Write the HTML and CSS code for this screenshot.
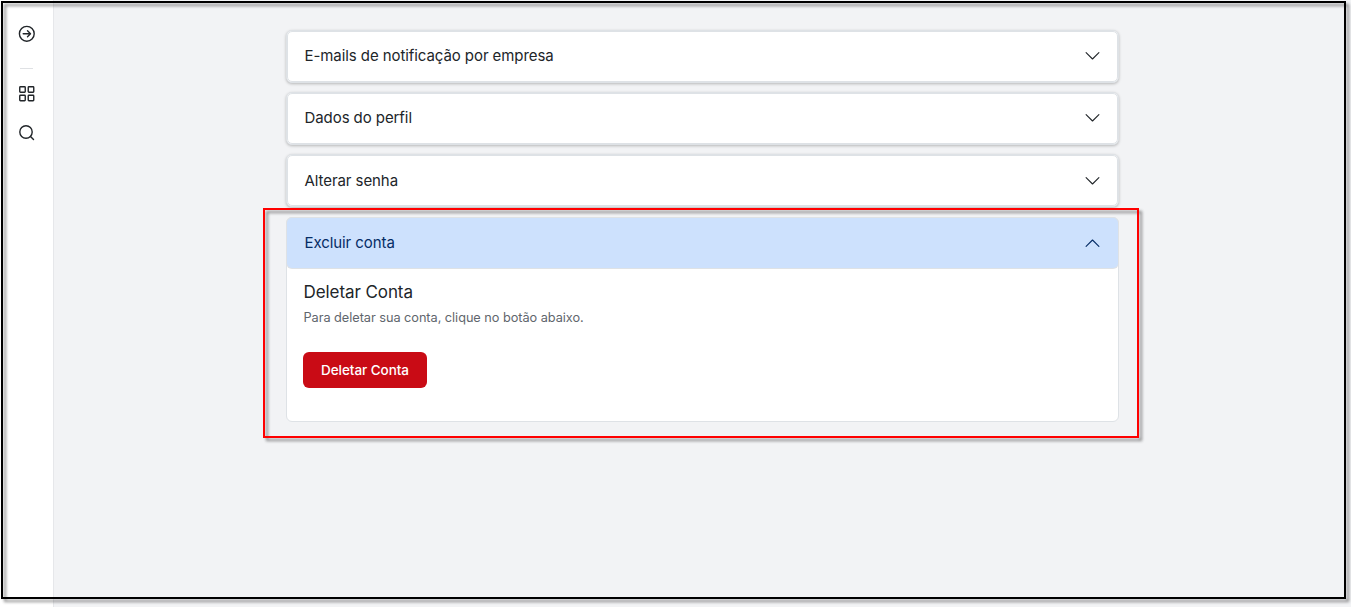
FILE: index.html
```html
<!DOCTYPE html>
<html lang="pt-BR">
<head>
<meta charset="utf-8">
<title>Configurações da conta</title>
<link rel="stylesheet" href="styles.css">
</head>
<body>
<div class="app">
  <aside class="sidebar">
    <svg class="icon icon-open" viewBox="0 0 18 18"><circle cx="8.8" cy="8.8" r="7.4"/><path d="M5.2 8.8h7.2M9.5 5.8l3 3-3 3"/></svg>
    <hr class="divider">
    <svg class="icon icon-grid" viewBox="0 0 18 18"><rect x="1.75" y="1.75" width="5.5" height="5.5" rx=".7"/><rect x="10.25" y="1.75" width="5.5" height="5.5" rx=".7"/><rect x="1.75" y="10.25" width="5.5" height="5.5" rx=".7"/><rect x="10.25" y="10.25" width="5.5" height="5.5" rx=".7"/></svg>
    <svg class="icon" viewBox="0 0 18 18"><circle cx="8" cy="8" r="6.2"/><path d="M12.5 12.5l3 3"/></svg>
  </aside>
  <main class="content">
    <div class="accordion">
      <section class="item closed"><button class="header"><span>E-mails de notificação por empresa</span><svg class="chevron" viewBox="0 0 16 16"><path d="M1.1 4.6 7.5 11l6.4-6.4"/></svg></button></section>
      <section class="item closed"><button class="header"><span>Dados do perfil</span><svg class="chevron" viewBox="0 0 16 16"><path d="M1.1 4.6 7.5 11l6.4-6.4"/></svg></button></section>
      <section class="item closed"><button class="header"><span>Alterar senha</span><svg class="chevron" viewBox="0 0 16 16"><path d="M1.1 4.6 7.5 11l6.4-6.4"/></svg></button></section>
      <section class="item open">
        <button class="header"><span>Excluir conta</span><svg class="chevron" viewBox="0 0 16 16"><path d="M1.1 11.4 7.5 5l6.4 6.4"/></svg></button>
        <div class="body">
          <h2 class="title">Deletar Conta</h2>
          <p class="text">Para deletar sua conta, clique no botão abaixo.</p>
          <button class="danger">Deletar Conta</button>
        </div>
      </section>
    </div>
  </main>
</div>
<div class="frame frame-page"></div>
<div class="frame frame-highlight"></div>
</body>
</html>
```
FILE: styles.css
```css
* { box-sizing: border-box; }
body { margin: 0; font-family: Inter, "Liberation Sans", sans-serif; color: #212529; overflow: hidden; }
button { font: inherit; border: 0; }
.app { display: flex; height: 607px; background: #f2f3f5; }
.sidebar {
  width: 54px; flex: none; display: flex; flex-direction: column; align-items: center;
  padding-top: 25px; background: #fff; border-right: 1px solid #e6e7ea;
}
.icon { width: 18px; height: 18px; flex: none; fill: none; stroke: #212529; stroke-width: 1.4; stroke-linecap: round; stroke-linejoin: round; }
.divider { width: 13px; height: 1px; margin: 25px 0 16px; border: 0; background: #dfe1e4; }
.icon-grid { margin-bottom: 21px; }
.content { flex: 1; padding: 30px 232px 0 232px; }
.accordion { display: flex; flex-direction: column; gap: 9.6px; }
.item { background: #fff; border: 1px solid #dee2e6; border-radius: 6px; }
.closed { box-shadow: 0 1px 3px rgba(0, 0, 0, .25); }
.closed .header { border: 1px solid #dee2e6; }
.header {
  display: flex; align-items: center; justify-content: space-between; width: 100%; height: 50.6px;
  padding: 0 17.5px; border-radius: 5px; background: #fff; color: #212529;
  font-size: 15px; letter-spacing: -.075px; text-align: left;
}
.closed .header { padding: 0 16.5px; }
.closed span { padding-bottom: 1.6px; }
.closed:nth-child(3) span { padding-bottom: .2px; }
.chevron { width: 16px; height: 16px; fill: none; stroke: currentColor; stroke-width: 1.1; stroke-linecap: round; stroke-linejoin: round; }
.open .header { background: #cde1fd; color: #052c65; box-shadow: 0 0 0 1px #dee2e6; }
.body { padding: 13px 16px 33px; }
.title { margin: 0; padding-left: .5px; font-size: 17px; font-weight: 400; line-height: 22px; letter-spacing: -.08px; }
.text { margin: 6.2px 0 25px; padding-left: .5px; font-size: 12.75px; line-height: 18px; letter-spacing: -.05px; color: #5f666d; }
.danger { display: block; width: 124px; height: 36px; padding: 0; border-radius: 6px; background: #c90b15; color: #fff; font-size: 13.5px; font-weight: 500; letter-spacing: -.05px; }
/* Annotation frames lie over the page */
.frame { position: absolute; pointer-events: none; filter: drop-shadow(3px 3px 1.5px rgba(0, 0, 0, .45)); }
.frame-page { left: 1px; top: 1px; width: 1345px; height: 598px; border: 2px solid #000; }
.frame-highlight { left: 263px; top: 208px; width: 876px; height: 230px; border: 2px solid #f00; }
```
